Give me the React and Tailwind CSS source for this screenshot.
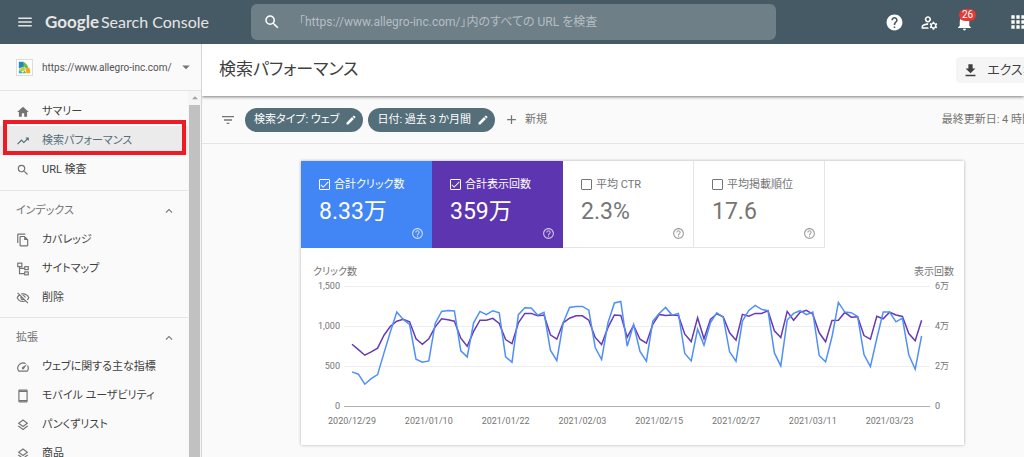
import React, { useState } from 'react';
import {
    MdAdd,
    MdApps,
    MdArrowDropDown,
    MdArrowDropUp,
    MdCheck,
    MdDownload,
    MdEdit,
    MdExpandLess,
    MdFilterList,
    MdHelp,
    MdHelpOutline,
    MdHome,
    MdMenu,
    MdNotifications,
    MdOutlineFileCopy,
    MdOutlineLayers,
    MdOutlineManageAccounts,
    MdOutlineSpeed,
    MdOutlineVisibilityOff,
    MdSearch,
    MdTrendingUp,
} from 'react-icons/md';

const SitemapIcon = ({ className }) => (
    <svg viewBox="0 0 24 24" className={className} fill="none" stroke="currentColor" strokeWidth="2">
        <rect x="3" y="2" width="7" height="6" />
        <rect x="15" y="8" width="6" height="5" />
        <rect x="15" y="17" width="6" height="5" />
        <path d="M6 8v12h9M6 11h9" />
    </svg>
);

const PhoneIcon = ({ className }) => (
    <svg viewBox="0 0 24 24" className={className} fill="none" stroke="currentColor">
        <rect x="5" y="2" width="14" height="20" rx="1" strokeWidth="2" />
        <path d="M5 4h14M5 20h14" strokeWidth="2" />
    </svg>
);

const SiteLogo = () => (
    <svg viewBox="0 0 18 18" className="size-[17px] shrink-0">
        <rect x="0.500" y="0.500" width="17" height="17" fill="#fff" stroke="#dcdcdc" />
        <path d="M3 3h5l1 5-6 2z" fill="#1e88c8" />
        <path d="M8 3c2 1 4 3 5 6l-3 1-2-3z" fill="#6cbf3c" />
        <path d="M3 11l5-3 2 3-5 3z" fill="#b4d334" />
        <path d="M10 10l4-1c1 2 1 4 1 6h-4z" fill="#f7a51c" />
        <path d="M3 12l5 3H3z" fill="#35a0dc" />
        <path d="M9 12l2 3H7z" fill="#6cbf3c" />
    </svg>
);

const sections = [
    {
        items: [
            { label: 'サマリー', icon: MdHome },
            { label: '検索パフォーマンス', icon: MdTrendingUp, active: true },
            { label: 'URL 検査', icon: MdSearch },
        ],
    },
    {
        title: 'インデックス',
        items: [
            { label: 'カバレッジ', icon: MdOutlineFileCopy },
            { label: 'サイトマップ', icon: SitemapIcon },
            { label: '削除', icon: MdOutlineVisibilityOff },
        ],
    },
    {
        title: '拡張',
        items: [
            { label: 'ウェブに関する主な指標', icon: MdOutlineSpeed },
            { label: 'モバイル ユーザビリティ', icon: PhoneIcon },
            { label: 'パンくずリスト', icon: MdOutlineLayers },
            { label: '商品', icon: MdOutlineLayers },
        ],
    },
];

const metrics = [
    { id: 'clicks', label: '合計クリック数', value: '8.33万', on: 'bg-[#4285f4]' },
    { id: 'impressions', label: '合計表示回数', value: '359万', on: 'bg-[#5e35b1]' },
    { id: 'ctr', label: '平均 CTR', value: '2.3%', on: 'bg-[#00897b]' },
    { id: 'position', label: '平均掲載順位', value: '17.6', on: 'bg-[#e8710a]' },
];

// Clicks per day
const clicks = [
    426, 397, 272, 343, 393, 664, 928, 1174, 1082, 1019, 585, 547, 564, 1032, 1182, 1195, 1187, 689,
    614, 1040, 1182, 1141, 1191, 1166, 614, 547, 1141, 1228, 1224, 1136, 1170, 698, 568, 1040, 1232,
    1245, 1245, 1199, 731, 581, 1040, 1287, 1308, 748, 1019, 681, 560, 1061, 1157, 1232, 1136, 1157,
    656, 564, 961, 760, 1040, 1166, 1111, 677, 560, 1061, 1195, 1258, 1207, 1191, 664, 501, 1074,
    1157, 1191, 1141, 1174, 631, 551, 865, 1295, 1174, 1166, 1120, 643, 493, 844, 1174, 1174, 1053,
    1099, 639, 460, 877,
];

// Impressions per day, in thousands
const impressions = [
    30.9, 28.2, 25.4, 27.1, 28.9, 35.4, 39.9, 42.4, 43.3, 42.1, 33.6, 30.9, 33.6, 39.6, 43.6, 43.1,
    42.4, 33.9, 29.9, 37.3, 42.9, 42.9, 43.8, 41.3, 33.2, 31.2, 41.6, 46.3, 46.3, 45.1, 45.5, 35.6,
    33.4, 41.6, 43.9, 45.1, 45.1, 42.9, 34.3, 30.7, 39.3, 45.5, 45.3, 34.4, 40.3, 33.4, 31.4, 40.8,
    45.8, 45.3, 45.5, 45.3, 35.9, 32.2, 44.1, 33.6, 43.3, 46.1, 44.6, 36.6, 32.9, 45.8, 44.9, 46.3,
    46.3, 47.6, 37.6, 34.3, 47.3, 42.9, 46.8, 47.8, 45.9, 36.6, 32.1, 42.8, 42.9, 46.8, 44.4, 44.6,
    35.2, 33.4, 44.9, 43.6, 46.9, 45.5, 44.8, 36.2, 32.6, 42.9,
];

const dates = ['2020/12/29', '2021/01/10', '2021/01/22', '2021/02/03', '2021/02/15', '2021/02/27', '2021/03/11', '2021/03/23'];

const ticks = [
    { left: '1,500', right: '6万', y: 38 },
    { left: '1,000', right: '4万', y: 78 },
    { left: '500', right: '2万', y: 118 },
    { left: '0', right: '0', y: 158 },
];

const dayX = (i) => 51 + i * 6.4;
const toPoints = (data, max) => data.map((v, i) => `${dayX(i).toFixed(1)},${(158 - (v / max) * 120).toFixed(1)}`).join(' ');

const Header = () => (
    <header className="flex h-11 shrink-0 items-center bg-[#455a64] text-white">
        <div className="flex w-[251px] shrink-0 items-center gap-[11px] pl-4">
            <button aria-label="メニュー"><MdMenu className="size-[18px] text-neutral-200" /></button>
            <a href="#" className="flex items-baseline gap-0.5 font-['Lato',sans-serif] text-[17px] leading-6 text-neutral-200">
                <span className="font-bold">Google</span>
                <span className="text-[16px]">Search Console</span>
            </a>
        </div>
        <label className="flex h-9 min-w-0 max-w-[525px] flex-1 items-center gap-[18px] rounded-md bg-[#6f7f87] pl-3">
            <MdSearch className="size-[18px] shrink-0" />
            <input
                type="text"
                aria-label="URL 検査"
                placeholder="「https://www.allegro-inc.com/」内のすべての URL を検査"
                className="w-full bg-transparent text-[12px] outline-none placeholder:text-[#b4bec3]"
            />
        </label>
        <div className="-mr-1 ml-auto flex shrink-0 items-center gap-4">
            <button aria-label="ヘルプ"><MdHelp className="size-[19px]" /></button>
            <button aria-label="ユーザー設定"><MdOutlineManageAccounts className="size-[19px]" /></button>
            <button aria-label="通知" className="relative">
                <MdNotifications className="size-[19px]" />
                <span className="absolute -top-1 left-1 rounded-full bg-[#e53935] px-[3px] text-[10px] leading-3">26</span>
            </button>
            <button aria-label="アプリ" className="ml-[18px]"><MdApps className="size-[20px]" /></button>
        </div>
    </header>
);

const Sidebar = () => (
    <aside className="flex w-[202px] shrink-0 flex-col border-r border-neutral-300">
        <button className="flex h-[47px] shrink-0 items-center border-b border-neutral-200 pl-4 pr-1.5 text-[10px] text-neutral-600">
            <SiteLogo />
            <span className="ml-[9px]">https://www.allegro-inc.com/</span>
            <MdArrowDropDown className="ml-auto size-[18px] text-neutral-500" />
        </button>
        <div className="flex min-h-0 flex-1">
            <nav className="min-w-0 flex-1 overflow-hidden">
                {sections.map((section, i) => (
                    <div key={i} className={`border-b border-neutral-200 ${section.title ? 'py-[5px]' : 'py-1.5'}`}>
                        {section.title && (
                            <button className="flex h-[29px] w-full items-center justify-between pl-4 pr-3 text-[11px] leading-[19px] text-neutral-500">
                                {section.title}
                                <MdExpandLess className="size-[14px]" />
                            </button>
                        )}
                        {section.items.map(({ label, icon: Icon, active }) => (
                            <a
                                key={label}
                                href="#"
                                className={`relative flex h-[29px] items-center gap-3 pl-4 text-[11px] leading-[19px] ${active ? 'bg-[#ebebeb] text-[#546e7a]' : 'text-neutral-700'}`}
                            >
                                <Icon className={`size-[14px] shrink-0 ${active ? '' : 'text-neutral-500'}`} />
                                {label}
                                {active && <span className="absolute -top-1.5 bottom-0 left-[3px] right-[2px] border-4 border-[#ed1c24]" />}
                            </a>
                        ))}
                    </div>
                ))}
            </nav>
            <div className="flex w-[13px] shrink-0 flex-col bg-neutral-100 px-px">
                <MdArrowDropUp className="size-[14px] shrink-0 self-center text-neutral-400" />
                <div className="flex-1 bg-[#c1c1c1]" />
            </div>
        </div>
    </aside>
);

const MetricCard = ({ metric, checked, onToggle }) => (
    <label
        className={`flex h-[87px] w-[131px] shrink-0 flex-col pl-[18px] pt-[15px] ${checked ? `${metric.on} text-white` : 'border-b border-r border-neutral-200 text-[#757575]'}`}
    >
        <span className="flex h-4 items-center gap-1 text-[11px] leading-[19px]">
            <span className="relative flex size-[11px]">
                <input
                    type="checkbox"
                    checked={checked}
                    onChange={onToggle}
                    className="size-[11px] appearance-none rounded-[1px] border border-current"
                />
                {checked && <MdCheck className="pointer-events-none absolute inset-0 size-[11px]" />}
            </span>
            {metric.label}
        </span>
        <span className="mt-1.5 text-[23px] leading-7">{metric.value}</span>
        <MdHelpOutline className="mr-2 mt-px self-end text-[13px] opacity-70" />
    </label>
);

const Chart = () => (
    <svg viewBox="0 0 663 197" className="block w-full text-[9px]" fill="#757575" role="img" aria-label="クリック数と表示回数">
        <text x="12" y="27" className="text-[10px]">クリック数</text>
        <text x="653" y="27" textAnchor="end" className="text-[10px]">表示回数</text>
        {ticks.map(({ left, right, y }) => (
            <g key={y}>
                <line x1="43" x2="629" y1={y} y2={y} stroke={left === '0' ? '#b0b0b0' : '#eeeeee'} shapeRendering="crispEdges" />
                <text x="39" y={y + 3} textAnchor="end">{left}</text>
                <text x="634" y={y + 3}>{right}</text>
            </g>
        ))}
        {dates.map((date, i) => (
            <text key={date} x={dayX(i * 12)} y="176" textAnchor="middle">{date}</text>
        ))}
        <polyline points={toPoints(impressions, 60)} fill="none" stroke="#673ab7" strokeWidth="1.500" />
        <polyline points={toPoints(clicks, 1500)} fill="none" stroke="#4f90f8" strokeWidth="1.500" />
    </svg>
);

const FilterChip = ({ children }) => (
    <button className="flex h-6 items-center gap-1.5 rounded-full bg-[#546e7a] pl-[9px] pr-1.5 text-[11px] leading-[19px] text-white">
        {children}
        <MdEdit className="size-[12px]" />
    </button>
);

const App = () => {
    const [selected, setSelected] = useState(['clicks', 'impressions']);

    const toggle = (id) => {
        setSelected(selected.includes(id) ? selected.filter((s) => s !== id) : [...selected, id]);
    };

    return (
        <div className="flex h-screen flex-col overflow-hidden bg-[#fafafa] font-['Roboto','Noto_Sans_CJK_JP',sans-serif] [font-feature-settings:'palt'] whitespace-nowrap">
            <Header />
            <div className="flex min-h-0 flex-1">
                <Sidebar />
                <main className="min-w-0 flex-1 overflow-hidden">
                    {/* Page title */}
                    <div className="relative flex h-[52px] items-center justify-between bg-white pl-[17px] shadow-[0_1px_3px_rgba(0,0,0,0.5)]">
                        <h1 className="text-[17px] text-neutral-700">検索パフォーマンス</h1>
                        <button className="-mr-10 flex h-[26px] items-center gap-2 rounded-sm bg-neutral-100 px-1.5 text-[13px] text-neutral-700">
                            <MdDownload className="size-[17px]" />
                            エクスポート
                        </button>
                    </div>

                    {/* Filters */}
                    <div className="flex h-12 items-center gap-[5px] border-b border-neutral-200 pl-[18px] text-[11px] leading-[19px] text-[#757575]">
                        <button aria-label="フィルタ" className="mr-1"><MdFilterList className="size-[16px]" /></button>
                        <FilterChip>検索タイプ: ウェブ</FilterChip>
                        <FilterChip>日付: 過去 3 か月間</FilterChip>
                        <button className="ml-1 flex items-center gap-1.5">
                            <MdAdd className="size-[15px]" />
                            新規
                        </button>
                        <p className="-mr-5 ml-auto">最終更新日: 4 時間前</p>
                    </div>

                    {/* Performance card */}
                    <div className="pl-[99px] pr-[60px] pt-[17px]">
                        <section className="bg-white shadow-[0_0_3px_rgba(0,0,0,0.3)]">
                            <div className="flex">
                                {metrics.map((metric) => (
                                    <MetricCard
                                        key={metric.id}
                                        metric={metric}
                                        checked={selected.includes(metric.id)}
                                        onToggle={() => toggle(metric.id)}
                                    />
                                ))}
                            </div>
                            <Chart />
                        </section>
                    </div>
                </main>
            </div>
        </div>
    );
};

export default App;
